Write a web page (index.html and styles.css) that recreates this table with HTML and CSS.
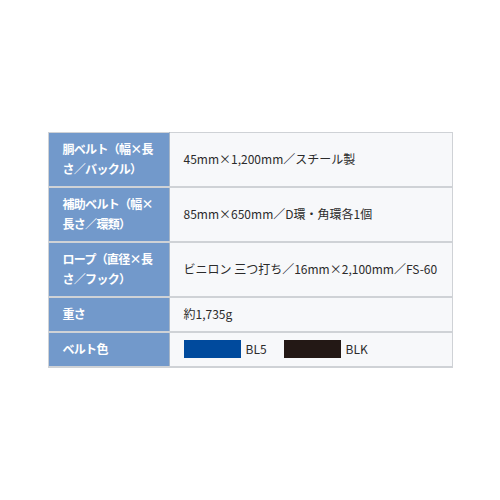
FILE: index.html
```html
<!DOCTYPE html>
<html lang="ja">
<head>
  <meta charset="UTF-8" />
  <meta name="viewport" content="width=device-width, initial-scale=1.0"/>
  <title>仕様</title>
  <link rel="stylesheet" href="styles.css">
</head>
<body>
  <table class="spec">
    <tr>
      <th>胴ベルト（幅×長さ／バックル）</th>
      <td>45mm×1,200mm／スチール製</td>
    </tr>
    <tr>
      <th>補助ベルト（幅×長さ／環類）</th>
      <td>85mm×650mm／D環・角環各1個</td>
    </tr>
    <tr>
      <th>ロープ（直径×長さ／フック）</th>
      <td>ビニロン 三つ打ち／16mm×2,100mm／FS-60</td>
    </tr>
    <tr>
      <th>重さ</th>
      <td>約1,735g</td>
    </tr>
    <tr>
      <th>ベルト色</th>
      <td>
        <div class="colors">
          <span class="swatch swatch-blue"></span><span class="color-name">BL5</span>
          <span class="swatch swatch-black"></span><span class="color-name">BLK</span>
        </div>
      </td>
    </tr>
  </table>
</body>
</html>
```

FILE: styles.css
```css
body {
  margin: 0;
  height: 100vh;
  display: flex;
  justify-content: center;
  align-items: center;
  background: #fff;
  font-family: "Noto Sans CJK JP", "Noto Sans", sans-serif;
}

.spec {
  width: 405px;
  border-collapse: collapse;
  border: 1px solid #cfd2d6;
}

.spec th,
.spec td {
  padding: 6px 8px 7px 14px;
  line-height: 20px;
  vertical-align: middle;
  border-bottom: 2px solid #cfd2d6;
}

.spec th {
  width: 92px;
  padding-right: 14px;
  background: #7299cb;
  color: #fff;
  font-size: 12px;
  font-weight: bold;
  letter-spacing: -0.7px;
  text-align: left;
  border-right: 1px solid #a7b6c8;
}

.spec td {
  background: #f7f8fa;
  color: #2b2b2b;
  font-size: 12px;
}

.colors {
  display: flex;
  align-items: center;
}

.swatch {
  width: 57px;
  height: 18px;
  margin-right: 5px;
}

.swatch-blue { background: #004a9d; }
.swatch-black { background: #231815; }

.color-name {
  margin-right: 17px;
}
```
